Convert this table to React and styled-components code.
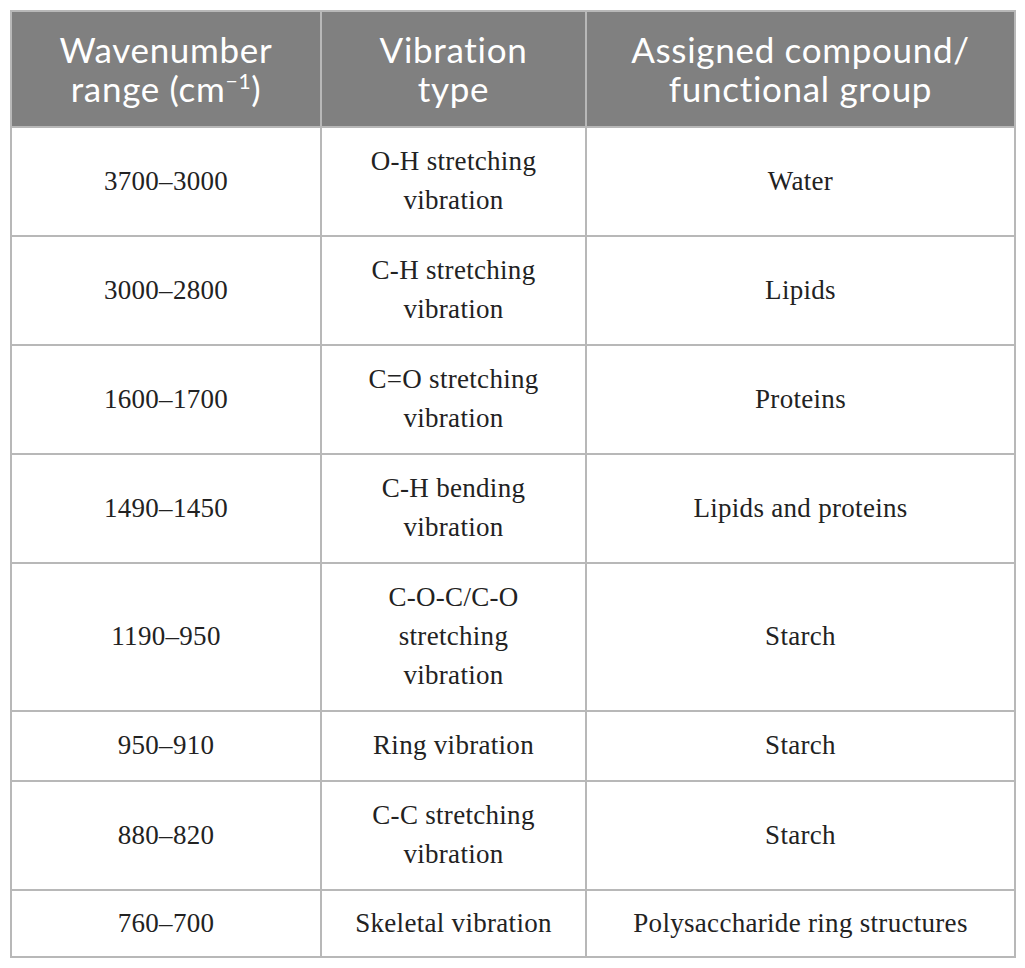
import React from 'react';
import styled, { createGlobalStyle } from 'styled-components';

const GlobalStyle = createGlobalStyle`
  html, body {
    margin: 0;
    padding: 0;
    background: #ffffff;
  }
`;

const Page = styled.div`
  padding: 10px 0 0 10px;
`;

const Table = styled.table`
  width: 1004px;
  border-collapse: collapse;
  table-layout: fixed;
  border: 2px solid #b8b8b8;
`;

const HeadCell = styled.th`
  background: #808080;
  color: #ffffff;
  font-family: Lato, "Open Sans", sans-serif;
  font-weight: 400;
  font-size: 35px;
  line-height: 39px;
  letter-spacing: 0.7px;
  padding: 18px 4px 18px;
  text-align: center;
  border: 2px solid #b8b8b8;
  border-top: none;
`;

const Cell = styled.td`
  font-family: "Liberation Serif", "Times New Roman", serif;
  font-size: 27px;
  line-height: 39px;
  letter-spacing: 0.3px;
  color: #222222;
  text-align: center;
  padding: ${({ $tight }) => ($tight ? '13px 8px 13px' : '14px 8px 15px')};
  border: 2px solid #b8b8b8;
`;

const Sup = styled.sup`
  font-size: 0.6em;
  line-height: 0;
  vertical-align: 0.6em;
`;

const rows = [
  ['3700–3000', ['O-H stretching', 'vibration'], 'Water'],
  ['3000–2800', ['C-H stretching', 'vibration'], 'Lipids'],
  ['1600–1700', ['C=O stretching', 'vibration'], 'Proteins'],
  ['1490–1450', ['C-H bending', 'vibration'], 'Lipids and proteins'],
  ['1190–950', ['C-O-C/C-O', 'stretching', 'vibration'], 'Starch'],
  ['950–910', ['Ring vibration'], 'Starch'],
  ['880–820', ['C-C stretching', 'vibration'], 'Starch'],
  ['760–700', ['Skeletal vibration'], 'Polysaccharide ring structures'],
];

const App = () => (
  <>
    <GlobalStyle />
    <Page>
      <Table>
        <colgroup>
          <col style={{ width: '310px' }} />
          <col style={{ width: '265px' }} />
          <col style={{ width: '429px' }} />
        </colgroup>
        <thead>
          <tr>
            <HeadCell>
              Wavenumber
              <br />
              range (cm<Sup>−1</Sup>)
            </HeadCell>
            <HeadCell>
              Vibration
              <br />
              type
            </HeadCell>
            <HeadCell>
              Assigned compound/
              <br />
              functional group
            </HeadCell>
          </tr>
        </thead>
        <tbody>
          {rows.map(([range, type, group], i) => {
            const tight = i === rows.length - 1;
            return (
              <tr key={range}>
                <Cell $tight={tight}>{range}</Cell>
                <Cell $tight={tight}>
                  {type.map((line, j) => (
                    <React.Fragment key={line}>
                      {j > 0 && <br />}
                      {line}
                    </React.Fragment>
                  ))}
                </Cell>
                <Cell $tight={tight}>{group}</Cell>
              </tr>
            );
          })}
        </tbody>
      </Table>
    </Page>
  </>
);

export default App;
